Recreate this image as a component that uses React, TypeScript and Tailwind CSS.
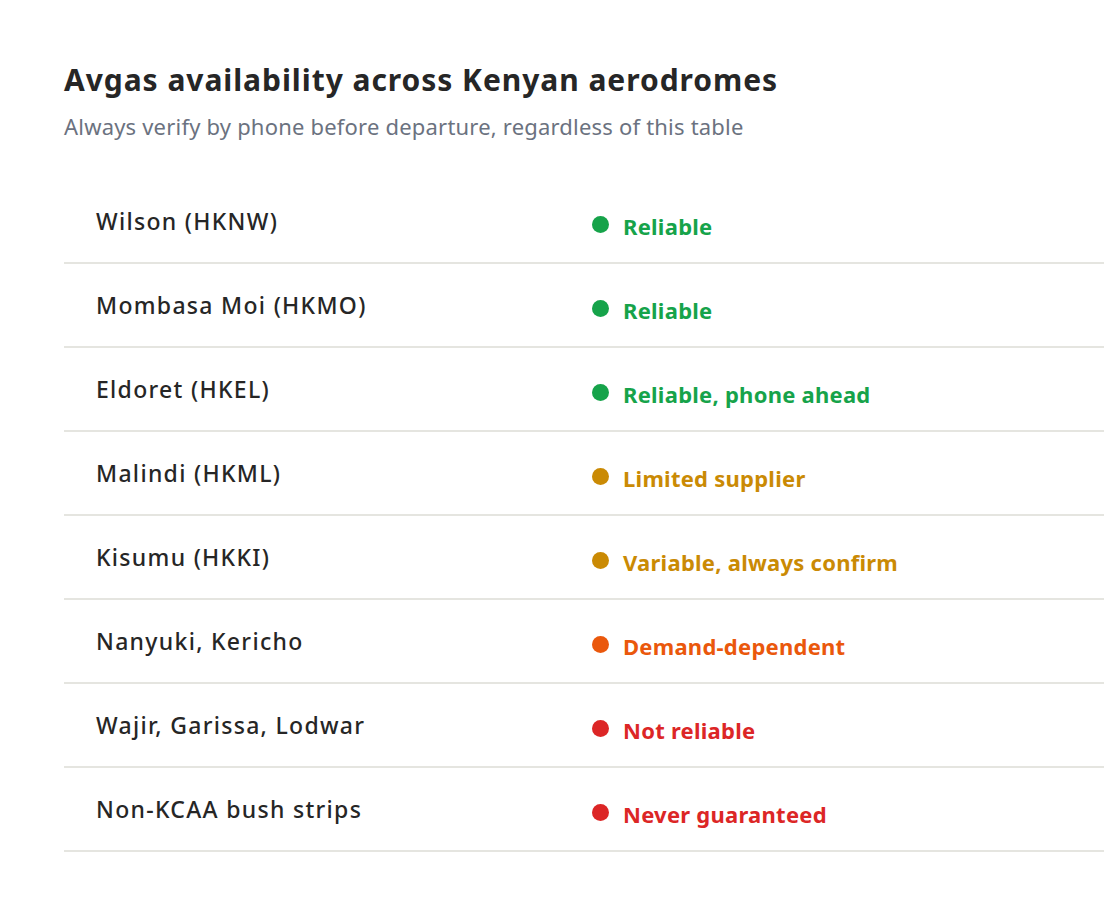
const ROWS = [
  { name: 'Wilson (HKNW)', status: 'Reliable', tone: 'green' },
  { name: 'Mombasa Moi (HKMO)', status: 'Reliable', tone: 'green' },
  { name: 'Eldoret (HKEL)', status: 'Reliable, phone ahead', tone: 'green' },
  { name: 'Malindi (HKML)', status: 'Limited supplier', tone: 'amber' },
  { name: 'Kisumu (HKKI)', status: 'Variable, always confirm', tone: 'amber' },
  { name: 'Nanyuki, Kericho', status: 'Demand-dependent', tone: 'orange' },
  { name: 'Wajir, Garissa, Lodwar', status: 'Not reliable', tone: 'red' },
  { name: 'Non-KCAA bush strips', status: 'Never guaranteed', tone: 'red' },
];

const TONES: Record<string, { dot: string; text: string }> = {
  green: { dot: 'bg-[#16a34a]', text: 'text-[#16a34a]' },
  amber: { dot: 'bg-[#ca8a04]', text: 'text-[#ca8a04]' },
  orange: { dot: 'bg-[#ea580c]', text: 'text-[#ea580c]' },
  red: { dot: 'bg-[#dc2626]', text: 'text-[#dc2626]' },
};

export default function App() {
  return (
    <div className="min-h-screen bg-white pl-16 pr-4 pt-[60px] font-['Noto_Sans',sans-serif]">
      <h1 className="text-[30px] font-bold leading-[40px] tracking-[0.95px] text-[#262626]">
        Avgas availability across Kenyan aerodromes
      </h1>
      <p className="mt-[12px] text-[22px] leading-[28px] tracking-[0.2px] text-[#6b7280]">
        Always verify by phone before departure, regardless of this table
      </p>

      {/* status table */}
      <div className="mt-[40px] w-[1040px]">
        {ROWS.map(({ name, status, tone }) => (
          <div key={name} className="grid h-[84px] grid-cols-[528px_1fr] border-b-2 border-[#e5e5e0]">
            <div className="flex items-center pl-8 text-[23px] font-medium tracking-[1.3px] text-[#262626]">{name}</div>
            <div className="flex items-center gap-[14px]">
              <span className={`mt-[7px] h-[17px] w-[17px] rounded-full ${TONES[tone].dot}`} />
              <span className={`mt-[11px] text-[22px] font-bold tracking-[0.25px] ${TONES[tone].text}`}>{status}</span>
            </div>
          </div>
        ))}
      </div>
    </div>
  );
}
